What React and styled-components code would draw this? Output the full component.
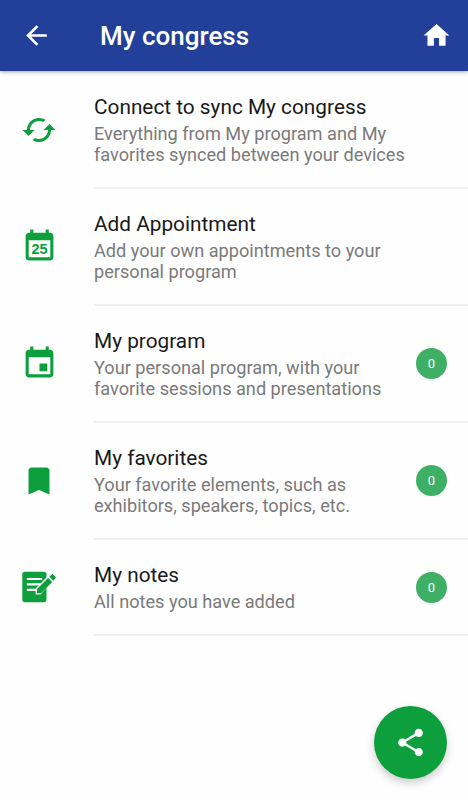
import styled, { createGlobalStyle } from "styled-components";

const colors = {
  blue: "#223f99",
  green: "#0c9f3c",
  badge: "#3eb065",
  text: "#191919",
  muted: "#7a7a7a",
  line: "#f0f0f0",
};

const items = [
  {
    title: "Connect to sync My congress",
    lines: ["Everything from My program and My", "favorites synced between your devices"],
    icon: <SyncIcon />,
  },
  {
    title: "Add Appointment",
    lines: ["Add your own appointments to your", "personal program"],
    icon: <DateIcon />,
  },
  {
    title: "My program",
    lines: ["Your personal program, with your", "favorite sessions and presentations"],
    icon: <EventIcon />,
    count: 0,
  },
  {
    title: "My favorites",
    lines: ["Your favorite elements, such as", "exhibitors, speakers, topics, etc."],
    icon: <BookmarkIcon />,
    count: 0,
  },
  {
    title: "My notes",
    lines: ["All notes you have added"],
    icon: <NotesIcon />,
    count: 0,
  },
];

export default function App() {
  return (
    <Screen>
      <GlobalStyle />
      <Header>
        <IconButton aria-label="Back">
          <svg width="31" height="31" viewBox="0 0 24 24" fill="currentColor">
            <path d="M20 11H7.83l5.59-5.59L12 4l-8 8 8 8 1.41-1.41L7.83 13H20v-2z" />
          </svg>
        </IconButton>
        <Heading>My congress</Heading>
        <IconButton aria-label="Home">
          <svg width="31" height="31" viewBox="0 0 24 24" fill="currentColor">
            <path d="M10 20v-6h4v6h5v-8h3L12 3 2 12h3v8z" />
          </svg>
        </IconButton>
      </Header>
      <List>
        {items.map((item) => (
          <MenuRow key={item.title} {...item} />
        ))}
      </List>
      <ShareButton aria-label="Share">
        <svg width="33" height="33" viewBox="0 0 24 24" fill="currentColor">
          <path d="M18 16.08c-.76 0-1.44.3-1.96.77L8.91 12.7c.05-.23.09-.46.09-.7s-.04-.47-.09-.7l7.05-4.11c.54.5 1.25.81 2.04.81 1.66 0 3-1.34 3-3s-1.34-3-3-3-3 1.34-3 3c0 .24.04.47.09.7L8.04 9.81C7.5 9.31 6.79 9 6 9c-1.66 0-3 1.34-3 3s1.34 3 3 3c.79 0 1.5-.31 2.04-.81l7.12 4.16c-.05.21-.08.43-.08.65 0 1.61 1.31 2.92 2.92 2.92s2.92-1.31 2.92-2.92-1.31-2.92-2.92-2.92z" />
        </svg>
      </ShareButton>
    </Screen>
  );
}

function MenuRow({ title, lines, icon, count }) {
  return (
    <Row $short={lines.length === 1}>
      <IconCell>{icon}</IconCell>
      <RowBody>
        <RowText>
          <RowTitle>{title}</RowTitle>
          {lines.map((line) => (
            <RowLine key={line}>{line}</RowLine>
          ))}
        </RowText>
        {count !== undefined && <Badge>{count}</Badge>}
      </RowBody>
    </Row>
  );
}

function SyncIcon() {
  return (
    <svg width="36" height="36" viewBox="0 0 24 24" fill="currentColor">
      <path d="M19 8l-4 4h3c0 3.31-2.69 6-6 6-1.01 0-1.97-.25-2.8-.7l-1.46 1.46C8.97 19.54 10.43 20 12 20c4.42 0 8-3.58 8-8h3l-4-4zM6 12c0-3.31 2.69-6 6-6 1.01 0 1.97.25 2.8.7l1.46-1.46C15.03 4.46 13.57 4 12 4c-4.42 0-8 3.58-8 8H1l4 4 4-4H6z" />
    </svg>
  );
}

function DateIcon() {
  return (
    <svg width="37" height="37" viewBox="0 0 24 24" fill="currentColor">
      <path d="M16 1v2H8V1H6v2H5c-1.11 0-1.99.9-1.99 2L3 19c0 1.1.89 2 2 2h14c1.1 0 2-.9 2-2V5c0-1.1-.9-2-2-2h-1V1h-2zm3 18H5V8h14v11z" />
      <text
        x="12"
        y="16.8"
        textAnchor="middle"
        fontFamily='"Liberation Sans", sans-serif'
        fontWeight="700"
        fontSize="9.4"
      >
        25
      </text>
    </svg>
  );
}

function EventIcon() {
  return (
    <svg width="37" height="37" viewBox="0 0 24 24" fill="currentColor">
      <path d="M17 12h-5v5h5v-5zM16 1v2H8V1H6v2H5c-1.11 0-1.99.9-1.99 2L3 19c0 1.1.89 2 2 2h14c1.1 0 2-.9 2-2V5c0-1.1-.9-2-2-2h-1V1h-2zm3 18H5V8h14v11z" />
    </svg>
  );
}

function BookmarkIcon() {
  return (
    <svg width="36" height="36" viewBox="0 0 24 24" fill="currentColor">
      <path d="M17 3H7c-1.1 0-1.99.9-1.99 2L5 21l7-3 7 3V5c0-1.1-.9-2-2-2z" />
    </svg>
  );
}

function NotesIcon() {
  return (
    <svg width="34" height="32" viewBox="0 0 34 32" fill="currentColor">
      <rect x="0.3" y="0.8" width="24.2" height="30.4" rx="2.6" />
      <path d="M4.8 8h15.4M4.8 13.4h14M4.8 18.8h9" stroke="#fff" strokeWidth="2.2" />
      <path
        d="M14.2 22.8v-5L26.4 5.4l3-3 4 4-3 3-12 13.4z"
        fill="#fff"
        stroke="#fff"
        strokeWidth="1.2"
      />
      <path d="M15 22.2v-4.1L26.1 7l4.1 4.1L19.1 22.2zM27.3 5.8l2.4-2.4c.5-.5 1-.5 1.5 0l2.3 2.3c.5.5.5 1 0 1.5l-2.2 2.5z" />
    </svg>
  );
}

const GlobalStyle = createGlobalStyle`
  body {
    margin: 0;
    background: #fefefe;
    font-family: Roboto, "Liberation Sans", sans-serif;
  }

  * {
    box-sizing: border-box;
  }

  svg {
    display: block;
    flex-shrink: 0;
  }
`;

const Screen = styled.div`
  width: 100%;
  height: 100vh;
  position: relative;
  overflow: hidden;
`;

const Header = styled.header`
  display: flex;
  align-items: center;
  height: 71px;
  padding: 0 16px 0 21px;
  color: #fff;
  background: ${colors.blue};
  box-shadow: 0 1px 4px rgba(0, 0, 0, 0.35);
`;

const IconButton = styled.button`
  padding: 0;
  border: none;
  background: none;
  color: inherit;
  cursor: pointer;
`;

const Heading = styled.h1`
  flex: 1;
  margin: 0 0 0 48px;
  font-size: 26px;
  line-height: 30px;
  font-weight: 500;
`;

const List = styled.ul`
  margin: 0;
  padding: 1px 0 0;
  list-style: none;
`;

const Row = styled.li`
  display: flex;
  height: ${({ $short }) => ($short ? 96 : 117)}px;
`;

const IconCell = styled.div`
  display: flex;
  align-items: center;
  justify-content: center;
  width: 78px;
  margin-right: 16px;
  padding-bottom: 2px;
  color: ${colors.green};
`;

const RowBody = styled.div`
  flex: 1;
  display: flex;
  align-items: center;
  justify-content: space-between;
  padding-right: 21px;
  border-bottom: 2px solid ${colors.line};
`;

const RowText = styled.div`
  white-space: nowrap;
`;

const RowTitle = styled.div`
  margin-bottom: 3px;
  color: ${colors.text};
  font-size: 20.8px;
  line-height: 26px;
`;

const RowLine = styled.div`
  color: ${colors.muted};
  font-size: 18.15px;
  line-height: 21px;
`;

const Badge = styled.span`
  display: flex;
  align-items: center;
  justify-content: center;
  width: 31px;
  height: 31px;
  border-radius: 50%;
  color: #fff;
  background: ${colors.badge};
  font-size: 13px;
`;

const ShareButton = styled.button`
  position: absolute;
  right: 21px;
  bottom: 21px;
  display: flex;
  align-items: center;
  justify-content: center;
  width: 73px;
  height: 73px;
  padding: 0;
  border: none;
  border-radius: 50%;
  color: #fff;
  background: ${colors.green};
  box-shadow: 0 4px 8px rgba(0, 0, 0, 0.2);
  cursor: pointer;
`;
